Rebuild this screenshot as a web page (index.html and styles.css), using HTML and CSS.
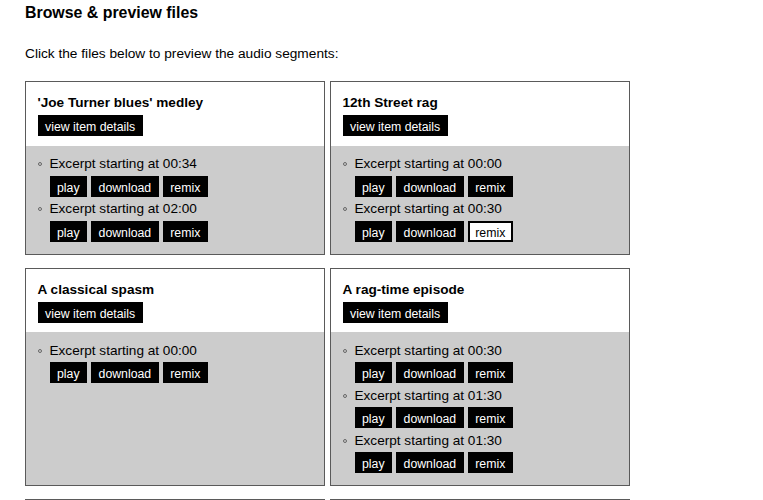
FILE: index.html
```html
<!DOCTYPE html>
<html lang="en">
<head>
<meta charset="utf-8">
<title>Browse &amp; preview files</title>
<link rel="stylesheet" href="styles.css">
</head>
<body>
<main class="page">
  <h3 class="page-title">Browse &amp; preview files</h3>
  <p class="intro">Click the files below to preview the audio segments:</p>
  <div class="grid">
    <section class="card">
      <div class="card-head">
        <h4 class="card-title">'Joe Turner blues' medley</h4>
        <button class="btn">view item details</button>
      </div>
      <ul class="excerpts">
        <li><span class="ex-label">Excerpt starting at 00:34</span><div class="actions"><button class="btn">play</button><button class="btn">download</button><button class="btn">remix</button></div></li>
        <li><span class="ex-label">Excerpt starting at 02:00</span><div class="actions"><button class="btn">play</button><button class="btn">download</button><button class="btn">remix</button></div></li>
      </ul>
    </section>
    <section class="card">
      <div class="card-head">
        <h4 class="card-title">12th Street rag</h4>
        <button class="btn">view item details</button>
      </div>
      <ul class="excerpts">
        <li><span class="ex-label">Excerpt starting at 00:00</span><div class="actions"><button class="btn">play</button><button class="btn">download</button><button class="btn">remix</button></div></li>
        <li><span class="ex-label">Excerpt starting at 00:30</span><div class="actions"><button class="btn">play</button><button class="btn">download</button><button class="btn btn-active">remix</button></div></li>
      </ul>
    </section>
    <section class="card">
      <div class="card-head">
        <h4 class="card-title">A classical spasm</h4>
        <button class="btn">view item details</button>
      </div>
      <ul class="excerpts">
        <li><span class="ex-label">Excerpt starting at 00:00</span><div class="actions"><button class="btn">play</button><button class="btn">download</button><button class="btn">remix</button></div></li>
      </ul>
    </section>
    <section class="card">
      <div class="card-head">
        <h4 class="card-title">A rag-time episode</h4>
        <button class="btn">view item details</button>
      </div>
      <ul class="excerpts">
        <li><span class="ex-label">Excerpt starting at 00:30</span><div class="actions"><button class="btn">play</button><button class="btn">download</button><button class="btn">remix</button></div></li>
        <li><span class="ex-label">Excerpt starting at 01:30</span><div class="actions"><button class="btn">play</button><button class="btn">download</button><button class="btn">remix</button></div></li>
        <li><span class="ex-label">Excerpt starting at 01:30</span><div class="actions"><button class="btn">play</button><button class="btn">download</button><button class="btn">remix</button></div></li>
      </ul>
    </section>
    <section class="card">
      <div class="card-head">
        <h4 class="card-title">Ragtime medley</h4>
        <button class="btn">view item details</button>
      </div>
      <ul class="excerpts">
        <li><span class="ex-label">Excerpt starting at 00:00</span><div class="actions"><button class="btn">play</button><button class="btn">download</button><button class="btn">remix</button></div></li>
      </ul>
    </section>
    <section class="card">
      <div class="card-head">
        <h4 class="card-title">Maple leaf rag</h4>
        <button class="btn">view item details</button>
      </div>
      <ul class="excerpts">
        <li><span class="ex-label">Excerpt starting at 00:00</span><div class="actions"><button class="btn">play</button><button class="btn">download</button><button class="btn">remix</button></div></li>
      </ul>
    </section>
  </div>
</main>
</body>
</html>
```

FILE: styles.css
```css
html, body {
  margin: 0;
  padding: 0;
  background: #ffffff;
}

body {
  font-family: "Liberation Sans", Arial, sans-serif;
  color: #000000;
  font-size: 13.6px;
}

.page {
  padding: 4px 25px 20px;
}

.page-title {
  margin: 0;
  font-size: 15.9px;
  line-height: 18px;
  font-weight: bold;
}

.intro {
  margin: 24px 0 19px;
  font-size: 13.7px;
  line-height: 16px;
}

.grid {
  display: grid;
  grid-template-columns: 300px 300px;
  column-gap: 5px;
  row-gap: 13px;
}

.card {
  display: flex;
  flex-direction: column;
  border: 1px solid #5a5a5a;
  background: #cccccc;
}

.card-head {
  background: #ffffff;
  padding: 12px 11.5px 9.5px;
}

.card-title {
  margin: 0 0 4px;
  font-size: 13.6px;
  line-height: 17px;
  font-weight: bold;
}

.btn {
  box-sizing: border-box;
  height: 21px;
  margin: 0;
  padding: 2px 5.5px 0;
  border: 2px solid #000000;
  background: #000000;
  color: #ffffff;
  font-family: "Liberation Sans", Arial, sans-serif;
  font-size: 12.3px;
  line-height: 17px;
  border-radius: 0;
  cursor: pointer;
}

.btn-active {
  background: #ffffff;
  color: #000000;
}

.excerpts {
  flex: 1;
  list-style: none;
  margin: 0;
  padding: 9.5px 0 12px 11.5px;
}

.excerpts li {
  display: grid;
  grid-template-columns: 12px auto;
  align-items: start;
}

.excerpts li + li {
  margin-top: 3.5px;
}

.excerpts li::before {
  content: "";
  grid-column: 1;
  grid-row: 1;
  box-sizing: border-box;
  width: 4px;
  height: 4px;
  margin-top: 7px;
  border: 1px solid #666666;
  border-radius: 50%;
}

.ex-label {
  grid-column: 2;
  grid-row: 1;
  line-height: 17px;
}

.actions {
  grid-column: 2;
  grid-row: 2;
  display: flex;
  gap: 4px;
  margin-top: 3.5px;
}
```
